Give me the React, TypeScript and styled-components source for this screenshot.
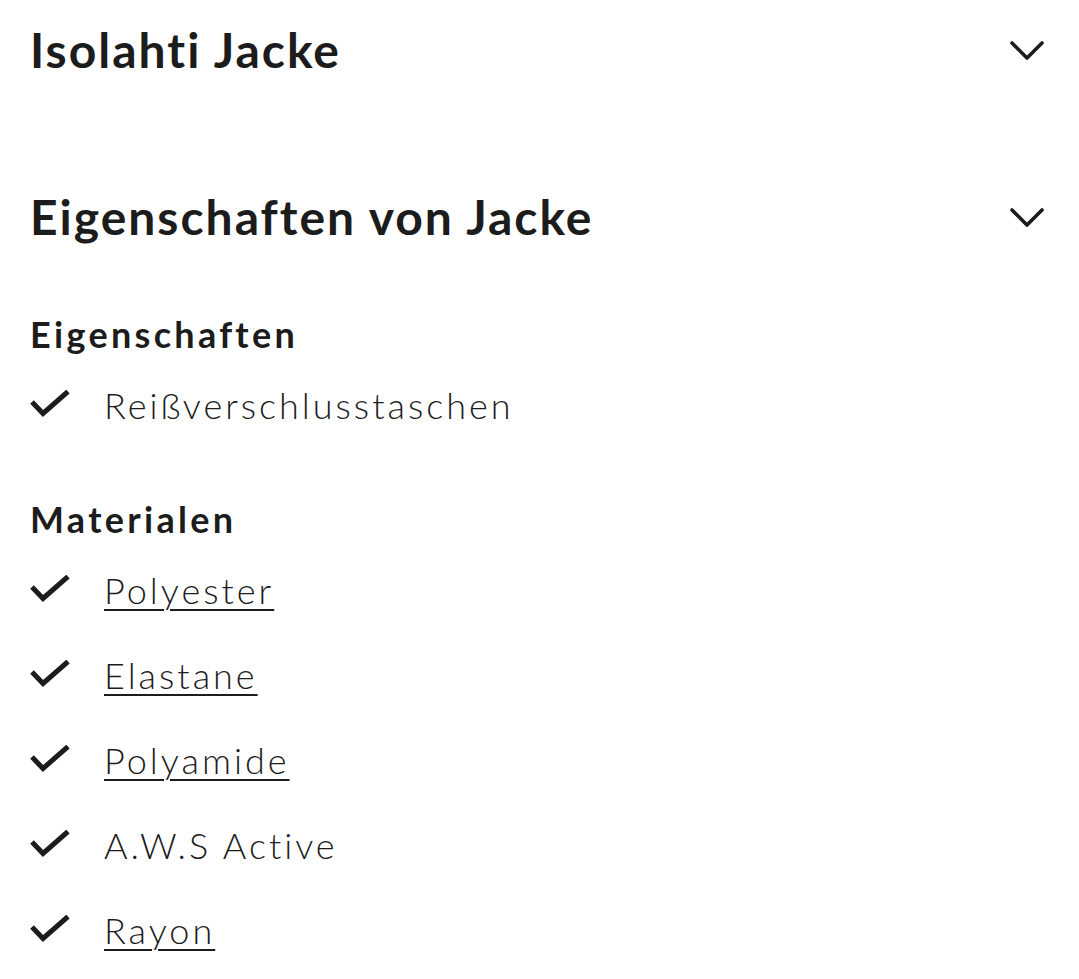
import React from "react";
import styled, { createGlobalStyle } from "styled-components";

interface Feature {
  label: string;
  link?: boolean;
}

interface Group {
  title: string;
  items: Feature[];
}

const groups: Group[] = [
  {
    title: "Eigenschaften",
    items: [{ label: "Reißverschlusstaschen" }],
  },
  {
    title: "Materialen",
    items: [
      { label: "Polyester", link: true },
      { label: "Elastane", link: true },
      { label: "Polyamide", link: true },
      { label: "A.W.S Active" },
      { label: "Rayon", link: true },
    ],
  },
];

const GlobalStyle = createGlobalStyle`
  html, body {
    margin: 0;
    padding: 0;
    background: #ffffff;
  }
  body {
    font-family: Lato, "Open Sans", "Liberation Sans", sans-serif;
    font-variant-ligatures: none;
    color: #1c1c1c;
    -webkit-font-smoothing: antialiased;
  }
`;

function Chevron() {
  return (
    <svg width="36" height="22" viewBox="0 0 36 22" fill="none">
      <polyline
        points="3,3 18,18 33,3"
        stroke="#1c1c1c"
        strokeWidth="3.6"
        strokeLinecap="round"
        strokeLinejoin="round"
      />
    </svg>
  );
}

function Check() {
  return (
    <svg width="40" height="30" viewBox="0 0 40 30" fill="none">
      <polyline
        points="2,12 13,23.5 38,1.5"
        stroke="#1c1c1c"
        strokeWidth="5"
        strokeLinejoin="miter"
      />
    </svg>
  );
}

function App() {
  return (
    <Page>
      <GlobalStyle />
      <Section $collapsed>
        <SectionHeader>
          <SectionTitle>Isolahti Jacke</SectionTitle>
          <Chevron />
        </SectionHeader>
      </Section>

      <Section>
        <SectionHeader>
          <SectionTitle>Eigenschaften von Jacke</SectionTitle>
          <Chevron />
        </SectionHeader>
        <SectionBody>
          {groups.map((group) => (
            <GroupBlock key={group.title}>
              <GroupTitle>{group.title}</GroupTitle>
              <List>
                {group.items.map((item) => (
                  <Item key={item.label}>
                    <IconCell>
                      <Check />
                    </IconCell>
                    {item.link ? (
                      <ItemLink href="#">{item.label}</ItemLink>
                    ) : (
                      <ItemText>{item.label}</ItemText>
                    )}
                  </Item>
                ))}
              </List>
            </GroupBlock>
          ))}
        </SectionBody>
      </Section>
    </Page>
  );
}

const Page = styled.main`
  width: 1079px;
  box-sizing: border-box;
  padding: 0 34px 0 30px;
`;

const Section = styled.section<{ $collapsed?: boolean }>`
  margin-bottom: ${(p) => (p.$collapsed ? "67px" : "0")};
`;

const SectionHeader = styled.div`
  display: flex;
  align-items: center;
  justify-content: space-between;
  height: 100px;

  svg {
    margin-top: 2px;
  }
`;

const SectionTitle = styled.h2`
  margin: 0;
  font-size: 48px;
  font-weight: 700;
  line-height: 60px;
  letter-spacing: 2px;
`;

const SectionBody = styled.div`
  padding-top: 38px;
  display: flex;
  flex-direction: column;
  gap: 43px;
`;

const GroupBlock = styled.div`
  display: flex;
  flex-direction: column;
`;

const GroupTitle = styled.h3`
  margin: 0;
  height: 57px;
  display: flex;
  align-items: center;
  font-size: 36px;
  font-weight: 700;
  line-height: 44px;
  letter-spacing: 3.3px;
`;

const List = styled.ul`
  margin: 0;
  padding: 0;
  list-style: none;
`;

const Item = styled.li`
  display: flex;
  align-items: center;
  height: 85px;
`;

const IconCell = styled.span`
  display: flex;
  align-items: center;
  width: 74px;
  flex-shrink: 0;
`;

const ItemText = styled.span`
  font-size: 36px;
  font-weight: 300;
  line-height: 44px;
  letter-spacing: 3px;
`;

const ItemLink = styled(ItemText).attrs({ as: "a" })`
  color: inherit;
  text-decoration: underline;
  text-decoration-thickness: 2px;
  text-underline-offset: 5px;
`;

export default App;
